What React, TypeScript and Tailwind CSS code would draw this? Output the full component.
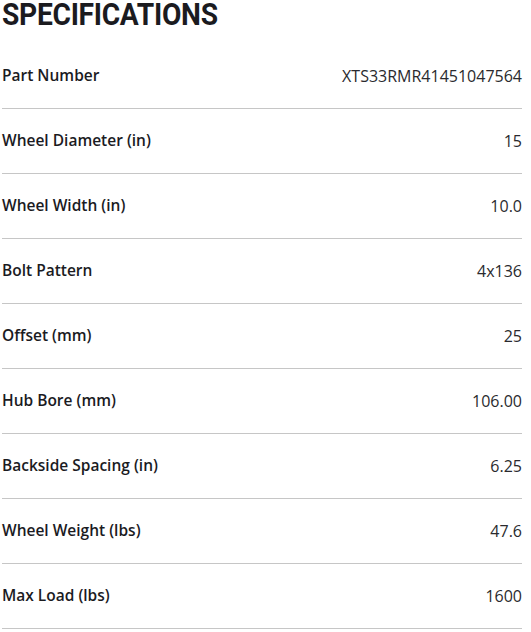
const specs = [
  { label: "Part Number", value: "XTS33RMR41451047564" },
  { label: "Wheel Diameter (in)", value: "15" },
  { label: "Wheel Width (in)", value: "10.0" },
  { label: "Bolt Pattern", value: "4x136" },
  { label: "Offset (mm)", value: "25" },
  { label: "Hub Bore (mm)", value: "106.00" },
  { label: "Backside Spacing (in)", value: "6.25" },
  { label: "Wheel Weight (lbs)", value: "47.6" },
  { label: "Max Load (lbs)", value: "1600" },
];

export default function App() {
  return (
    <div className="min-h-[632px] bg-white font-['Open_Sans','Liberation_Sans',sans-serif]">
      <div className="ml-[2px] w-[520px]">
        <div className="h-[44px]">
          <h2 className="inline-block origin-left scale-x-[0.88] font-['Roboto','Liberation_Sans',sans-serif] text-[32px] leading-[28px] font-bold uppercase tracking-[-0.01em] text-[#1b1b1f]">
            Specifications
          </h2>
        </div>
        {specs.map((s) => (
          <div
            key={s.label}
            className="flex h-[65px] items-center justify-between border-b border-[#c6c6c6] pb-[1px]"
          >
            <span className="text-[15.5px] font-semibold text-[#1b1b1f]">{s.label}</span>
            <span className="text-[16px] text-[#2a2a2e]">{s.value}</span>
          </div>
        ))}
      </div>
    </div>
  );
}
